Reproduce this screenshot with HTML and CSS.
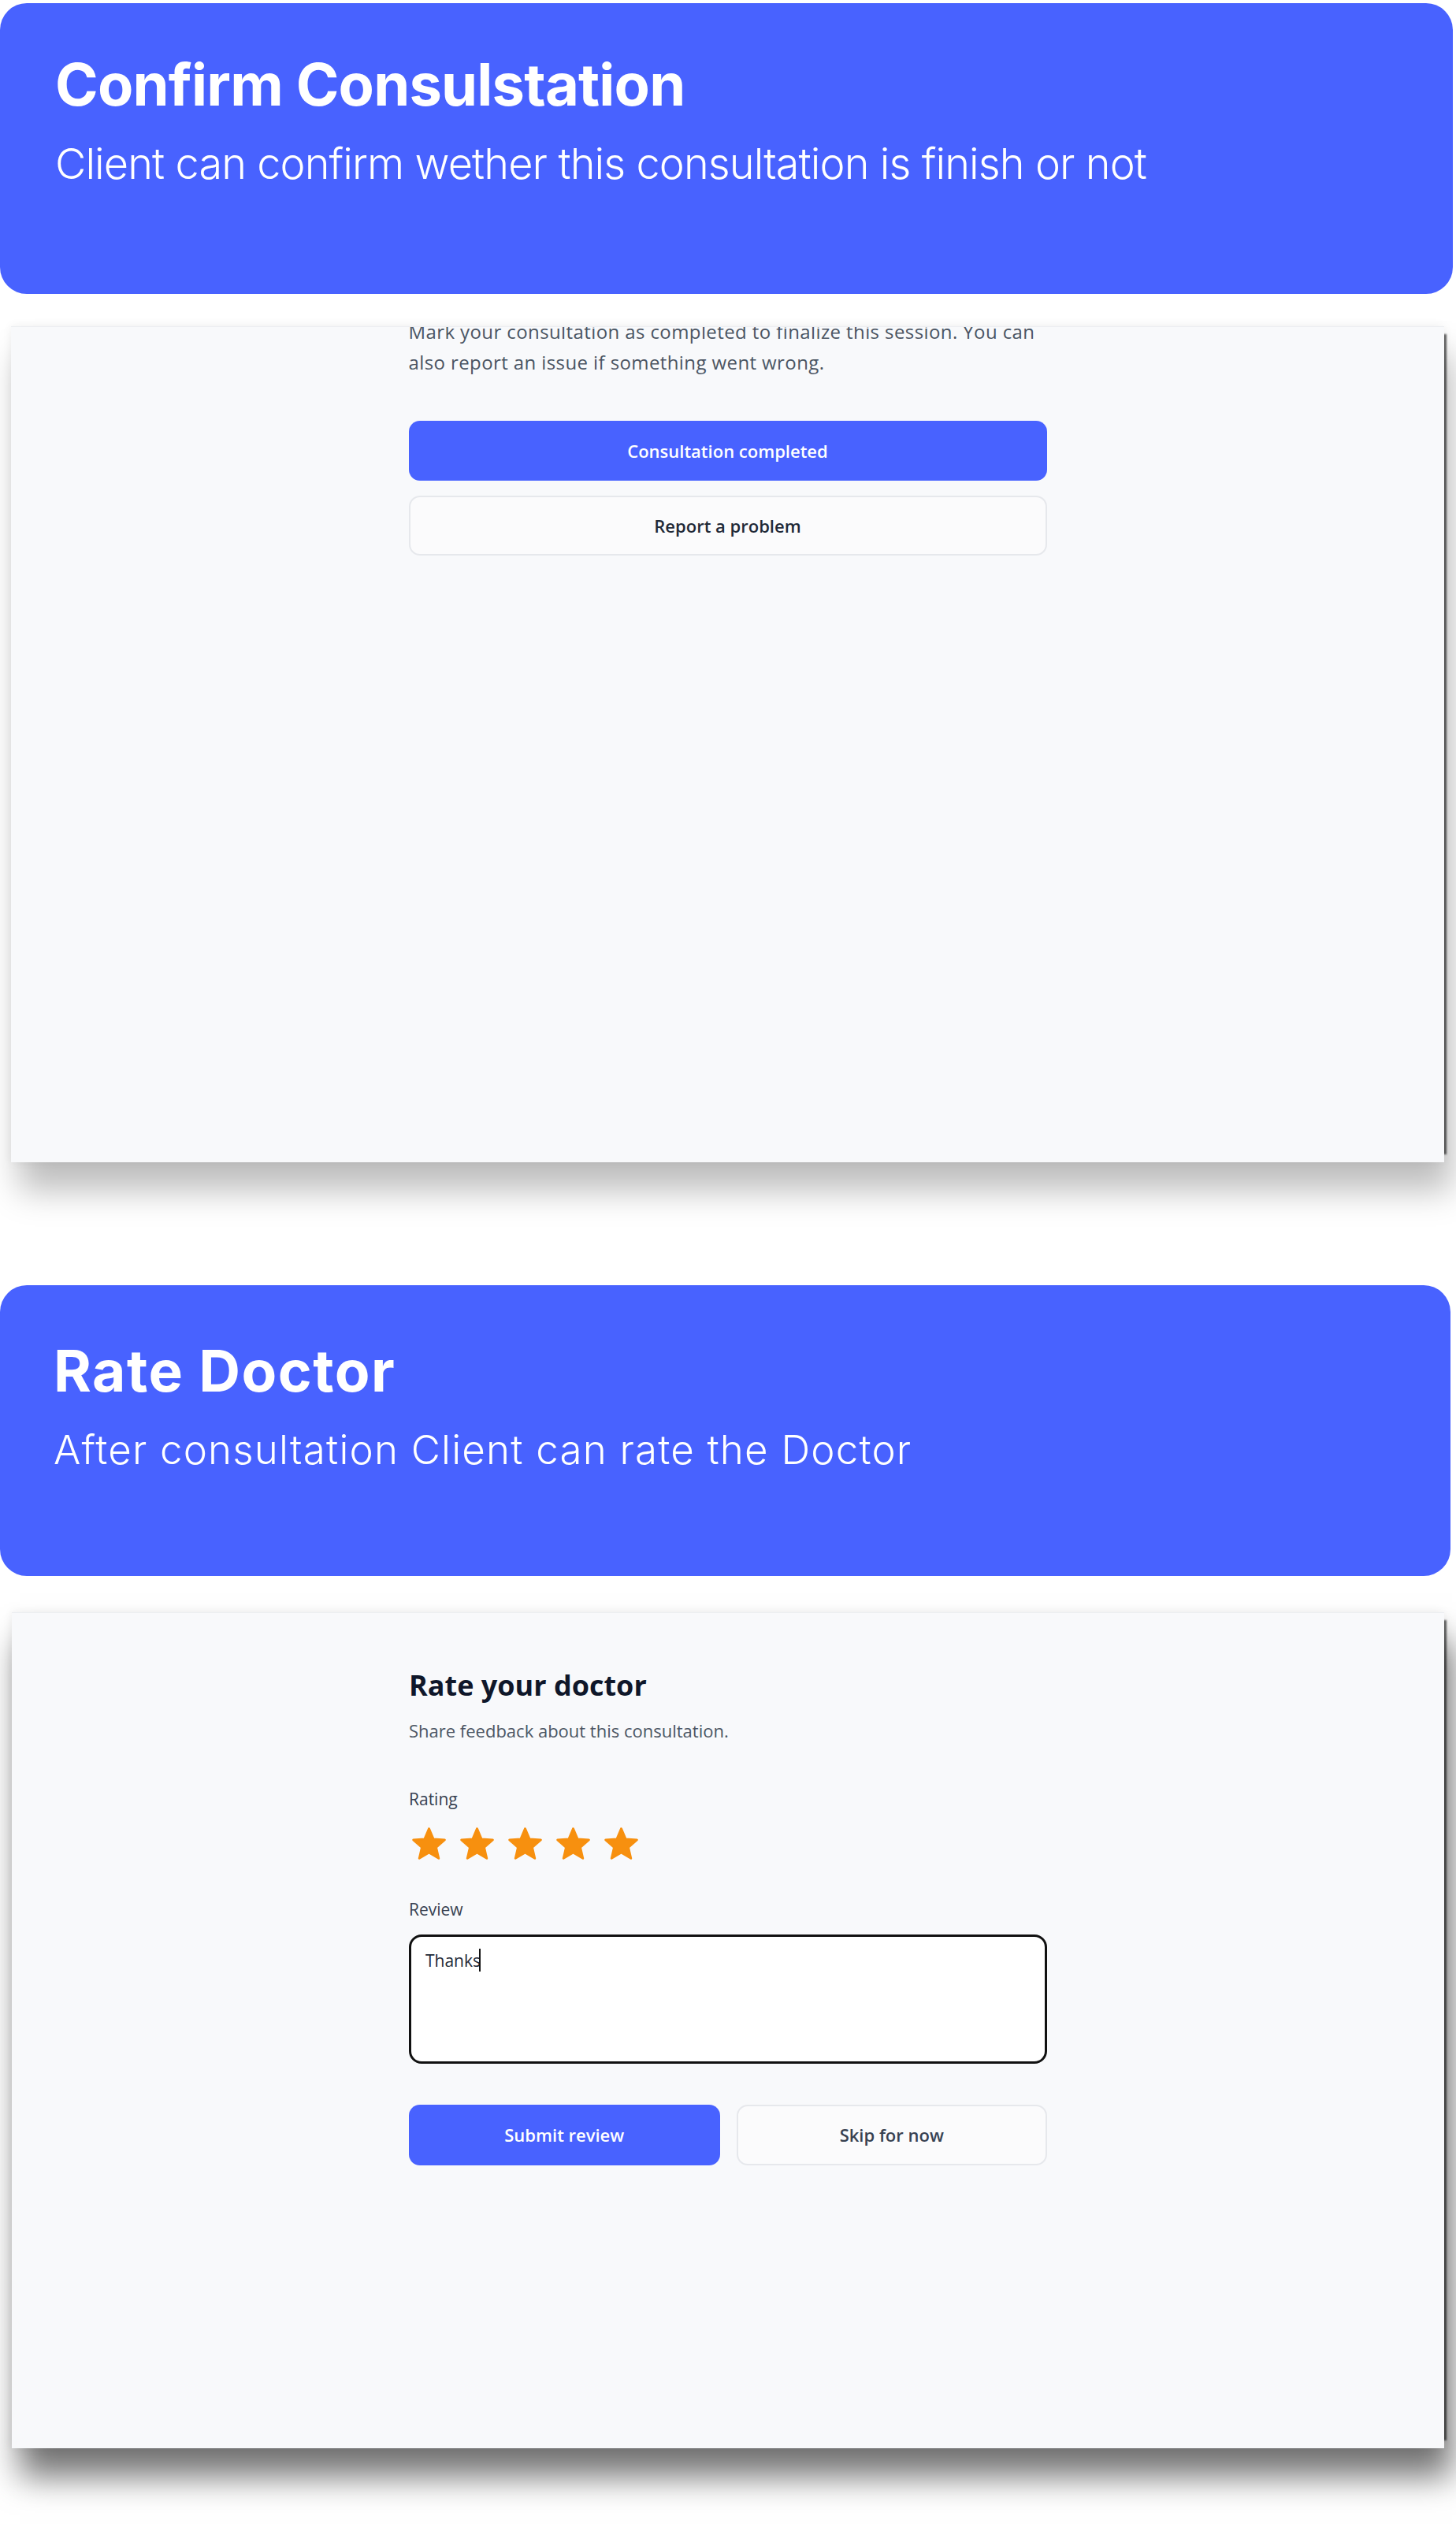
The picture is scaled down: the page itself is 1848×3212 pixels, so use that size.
FILE: index.html
```html
<!DOCTYPE html>
<html lang="en">
<head>
    <meta charset="UTF-8">
    <meta name="viewport" content="width=device-width, initial-scale=1.0">
    <title>Consultation flow</title>
    <link rel="stylesheet" href="styles.css">
</head>
<body>
    <section class="step">
        <div class="banner">
            <h1 class="banner-title">Confirm Consulstation</h1>
            <p class="banner-text">Client can confirm wether this consultation is finish or not</p>
        </div>

        <div class="shot shot-light">
            <div class="shot-body shot-body-clipped">
                <p class="lead">Mark your consultation as completed to finalize this session. You can also report an issue if something went wrong.</p>

                <div class="actions-stack">
                    <button class="btn btn-primary">Consultation completed</button>
                    <button class="btn btn-outline">Report a problem</button>
                </div>
            </div>
        </div>
    </section>

    <section class="step step-second">
        <div class="banner banner-second">
            <h1 class="banner-title">Rate Doctor</h1>
            <p class="banner-text">After consultation Client can rate the Doctor</p>
        </div>

        <div class="shot shot-dark">
            <div class="shot-body">
                <h2 class="form-title">Rate your doctor</h2>
                <p class="form-sub">Share feedback about this consultation.</p>

                <div class="field-label field-rating">Rating</div>
                <div class="stars">
                    <svg class="star" viewBox="1.2 1.2 21.6 20.6"><path d="M12 17.27L18.18 21l-1.64-7.03L22 9.24l-7.19-.61L12 2 9.19 8.63 2 9.24l5.46 4.73L5.82 21z"/></svg>
                    <svg class="star" viewBox="1.2 1.2 21.6 20.6"><path d="M12 17.27L18.18 21l-1.64-7.03L22 9.24l-7.19-.61L12 2 9.19 8.63 2 9.24l5.46 4.73L5.82 21z"/></svg>
                    <svg class="star" viewBox="1.2 1.2 21.6 20.6"><path d="M12 17.27L18.18 21l-1.64-7.03L22 9.24l-7.19-.61L12 2 9.19 8.63 2 9.24l5.46 4.73L5.82 21z"/></svg>
                    <svg class="star" viewBox="1.2 1.2 21.6 20.6"><path d="M12 17.27L18.18 21l-1.64-7.03L22 9.24l-7.19-.61L12 2 9.19 8.63 2 9.24l5.46 4.73L5.82 21z"/></svg>
                    <svg class="star" viewBox="1.2 1.2 21.6 20.6"><path d="M12 17.27L18.18 21l-1.64-7.03L22 9.24l-7.19-.61L12 2 9.19 8.63 2 9.24l5.46 4.73L5.82 21z"/></svg>
                </div>

                <div class="field-label field-review">Review</div>
                <div class="review-box">Thanks<span class="caret"></span></div>

                <div class="actions-row">
                    <button class="btn btn-primary">Submit review</button>
                    <button class="btn btn-outline btn-muted">Skip for now</button>
                </div>
            </div>
        </div>
    </section>
</body>
</html>
```

FILE: styles.css
```css
body {
    margin: 0;
    background-color: #fff;
    font-family: 'Open Sans', 'Liberation Sans', sans-serif;
    color: #111827;
}
.step {
    padding-top: 4px;
}
.step-second {
    padding-top: 156px;
    padding-bottom: 104px;
}

/* blue heading cards */
.banner {
    width: 1844px;
    height: 369px;
    box-sizing: border-box;
    padding: 66px 0 0 70px;
    background-color: #4862ff;
    border-radius: 34px;
    color: #fff;
    font-family: 'Inter', 'Liberation Sans', sans-serif;
}
.banner-second {
    width: 1841px;
    padding: 72px 0 0 68px;
}
.banner-title {
    margin: 0;
    font-size: 74px;
    line-height: 1;
    font-weight: 700;
    letter-spacing: -0.8px;
}
.banner-text {
    margin: 37px 0 0;
    font-size: 54px;
    line-height: 1;
    font-weight: 300;
    letter-spacing: -0.9px;
}
.banner-second .banner-title {
    font-size: 73px;
    letter-spacing: 1.5px;
}
.banner-second .banner-text {
    margin-top: 38px;
    font-size: 51px;
    letter-spacing: 1.2px;
}

/* screenshot panels */
.shot {
    height: 1061px;
    margin: 41px 0 0 14px;
    width: 1819px;
    background-color: #f8f9fb;
    border-top: 1px solid #eceef1;
    box-sizing: border-box;
    overflow: hidden;
}
.shot-light {
    box-shadow: 0 0 12px rgba(0, 0, 0, 0.06),
                13px 0 2px -10px rgba(0, 0, 0, 0.6),
                10px 36px 40px rgba(0, 0, 0, 0.26);
}
.shot-dark {
    margin-top: 46px;
    margin-left: 15px;
    width: 1818px;
    box-shadow: 0 0 12px rgba(0, 0, 0, 0.07),
                13px 0 2px -10px rgba(0, 0, 0, 0.6),
                10px 36px 40px rgba(0, 0, 0, 0.55);
}
.shot-body {
    width: 810px;
    margin: 0 auto;
    padding-top: 70px;
}
.shot-body-clipped {
    padding-top: 0;
    margin-top: -14px;
}

.lead {
    margin: 0;
    font-size: 24px;
    line-height: 39px;
    letter-spacing: 0.4px;
    color: #4b5563;
}
.actions-stack {
    display: flex;
    flex-direction: column;
    gap: 19px;
    margin-top: 55px;
}
.btn {
    height: 76px;
    border-radius: 14px;
    font-family: 'Open Sans', 'Liberation Sans', sans-serif;
    font-size: 22px;
    font-weight: 600;
    cursor: pointer;
}
.btn-primary {
    background-color: #4862ff;
    color: #fff;
    border: none;
}
.btn-outline {
    background-color: #fbfbfc;
    color: #1f2937;
    border: 2px solid #e6e8ec;
}
.btn-muted {
    color: #374151;
}

/* rating form */
.form-title {
    margin: 0;
    font-size: 36px;
    line-height: 1.2;
    font-weight: 700;
    color: #0f172a;
}
.form-sub {
    margin: 23px 0 0;
    font-size: 22px;
    line-height: 1.2;
    color: #4b5563;
}
.field-label {
    font-size: 21px;
    line-height: 1.2;
    font-weight: 500;
    color: #374151;
}
.field-rating {
    margin-top: 61px;
}
.stars {
    display: flex;
    gap: 18px;
    margin-top: 23px;
    padding-left: 4px;
}
.star {
    width: 43px;
    height: 41px;
    fill: #f7900f;
    stroke: #f7900f;
    stroke-width: 1.4;
    stroke-linejoin: round;
}
.field-review {
    margin-top: 51px;
}
.review-box {
    margin-top: 19px;
    height: 164px;
    box-sizing: border-box;
    padding: 15px 18px;
    background-color: #fff;
    border: 3px solid #111;
    border-radius: 16px;
    font-size: 21px;
    line-height: 1.2;
    color: #1f2937;
}
.caret {
    display: inline-block;
    width: 2px;
    height: 29px;
    margin-left: -2px;
    vertical-align: -6px;
    background-color: #111;
}
.actions-row {
    display: grid;
    grid-template-columns: 1fr 1fr;
    gap: 21px;
    margin-top: 52px;
}
.actions-row .btn {
    height: 77px;
}
```
